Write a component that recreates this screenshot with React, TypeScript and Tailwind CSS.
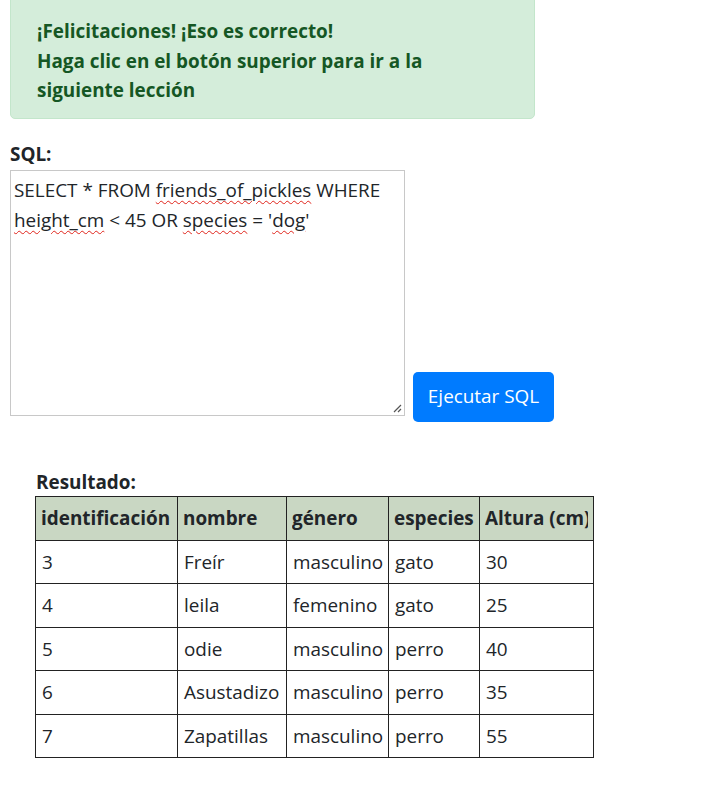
const rows = [
  { id: "3", nombre: "Freír", genero: "masculino", especie: "gato", altura: "30" },
  { id: "4", nombre: "leila", genero: "femenino", especie: "gato", altura: "25" },
  { id: "5", nombre: "odie", genero: "masculino", especie: "perro", altura: "40" },
  { id: "6", nombre: "Asustadizo", genero: "masculino", especie: "perro", altura: "35" },
  { id: "7", nombre: "Zapatillas", genero: "masculino", especie: "perro", altura: "55" },
];

const cols = ["w-[142px]", "w-[109px]", "w-[102px]", "w-[91px]", "w-[114px]"];

const Typo = ({ children }: { children: string }) => (
  <span className="underline decoration-wavy decoration-[#e0241b] decoration-1 underline-offset-[3px]">
    {children}
  </span>
);

export default function App() {
  return (
    <div className="min-h-screen bg-white text-[#212529] text-[18.9px] font-['Open_Sans',sans-serif]">
      <div className="px-[10px]">
        <div className="-mt-[8px] w-[525px] rounded-[5px] border border-[#c3e6cb] bg-[#d4edda] pl-[26px] pr-4 pt-[24px] pb-[12px] font-bold text-[#155724] leading-[29.5px]">
          ¡Felicitaciones! ¡Eso es correcto!
          <br />
          Haga clic en el botón superior para ir a la
          <br />
          siguiente lección
        </div>

        <div className="mt-[23px] font-bold leading-[24px]">SQL:</div>
        <div className="mt-[4px] flex items-end gap-[8px]">
          <div
            role="textbox"
            className="relative mb-[6px] h-[246px] w-[395px] border border-[#c8c8c8] px-[3px] pt-[4px] leading-[30px]"
          >
            SELECT * FROM <Typo>friends_of_pickles</Typo> WHERE <Typo>height_cm</Typo> &lt; 45 OR{" "}
            <Typo>species</Typo> = '<Typo>dog</Typo>'
            <svg className="absolute bottom-[2px] right-[2px]" width="10" height="10" viewBox="0 0 10 10">
              <path d="M9 2L2 9M9 6L6 9" stroke="#555" strokeWidth="1.2" />
            </svg>
          </div>
          <button className="h-[50px] w-[141px] rounded-[5px] bg-[#007bff] text-white">
            Ejecutar SQL
          </button>
        </div>
      </div>

      <div className="mt-[47px] pl-[35px]">
        <div className="pl-[1px] font-bold leading-[27px]">Resultado:</div>
        <table className="w-[559px] table-fixed border-collapse">
          <thead>
            <tr className="bg-[#c9d7c3]">
              {["identificación", "nombre", "género", "especies", "Altura (cm)"].map((h, i) => (
                <th
                  key={h}
                  className={`${cols[i]} h-[44px] border border-[#222] px-[5px] text-left font-bold`}
                >
                  <div className="overflow-hidden whitespace-nowrap">{h}</div>
                </th>
              ))}
            </tr>
          </thead>
          <tbody>
            {rows.map((r) => (
              <tr key={r.id}>
                {[r.id, r.nombre, r.genero, r.especie, r.altura].map((v, i) => (
                  <td
                    key={i}
                    className={`${cols[i]} h-[43.5px] border border-[#222] px-[6px] text-left whitespace-nowrap overflow-hidden`}
                  >
                    {v}
                  </td>
                ))}
              </tr>
            ))}
          </tbody>
        </table>
      </div>
    </div>
  );
}
